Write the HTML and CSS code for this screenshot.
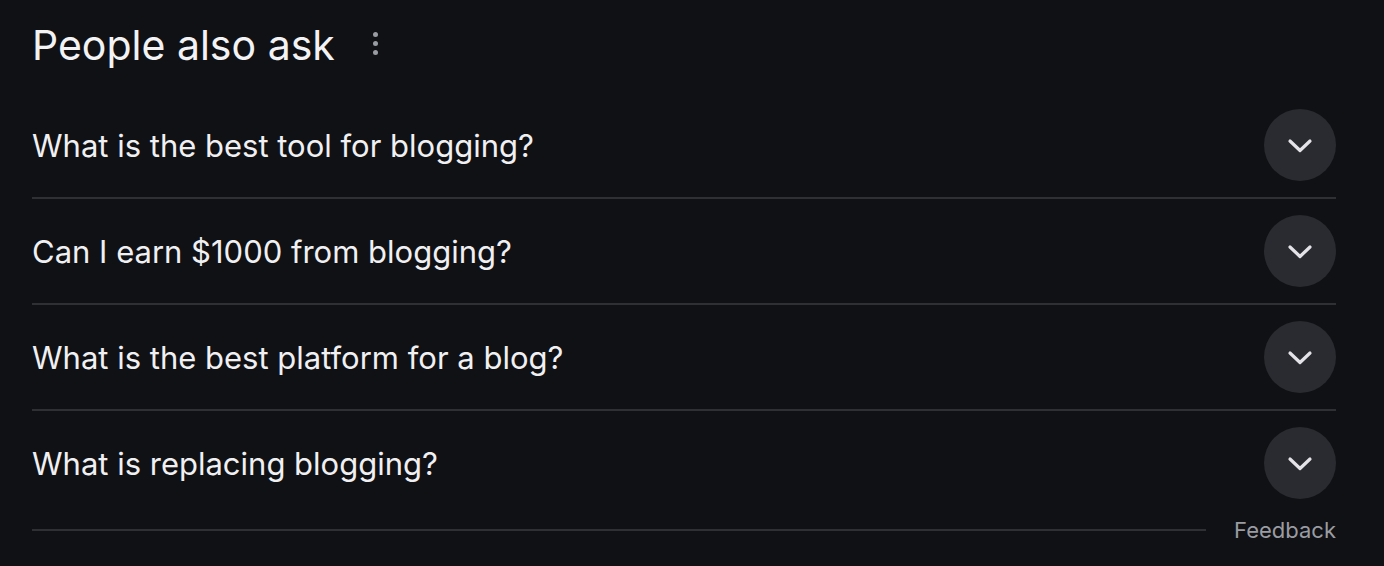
FILE: index.html
```html
<!DOCTYPE html>
<html>
<head>
<meta charset="utf-8">
<link rel="stylesheet" href="styles.css">
</head>
<body>
<div class="paa">
  <div class="head">
    <h2 class="title">People also ask</h2>
    <span class="more"><i></i><i></i><i></i></span>
  </div>
  <div class="list">
    <div class="row"><span class="q">What is the best tool for blogging?</span><span class="btn"><svg width="26" height="16" viewBox="0 0 26 16"><path d="M3 3 L13 12.5 L23 3" fill="none" stroke="#e3e3e8" stroke-width="3.2" stroke-linecap="round" stroke-linejoin="round"/></svg></span></div>
    <div class="row"><span class="q">Can I earn $1000 from blogging?</span><span class="btn"><svg width="26" height="16" viewBox="0 0 26 16"><path d="M3 3 L13 12.5 L23 3" fill="none" stroke="#e3e3e8" stroke-width="3.2" stroke-linecap="round" stroke-linejoin="round"/></svg></span></div>
    <div class="row"><span class="q">What is the best platform for a blog?</span><span class="btn"><svg width="26" height="16" viewBox="0 0 26 16"><path d="M3 3 L13 12.5 L23 3" fill="none" stroke="#e3e3e8" stroke-width="3.2" stroke-linecap="round" stroke-linejoin="round"/></svg></span></div>
    <div class="row last"><span class="q">What is replacing blogging?</span><span class="btn"><svg width="26" height="16" viewBox="0 0 26 16"><path d="M3 3 L13 12.5 L23 3" fill="none" stroke="#e3e3e8" stroke-width="3.2" stroke-linecap="round" stroke-linejoin="round"/></svg></span></div>
  </div>
  <div class="foot">
    <span class="line"></span>
    <span class="fb">Feedback</span>
  </div>
</div>
</body>
</html>
```
FILE: styles.css
```css
html, body {
  margin: 0;
  padding: 0;
  background: #101114;
}
body {
  font-family: Inter, Roboto, sans-serif;
  color: #e8e8ec;
  width: 1384px;
  height: 566px;
  overflow: hidden;
}
.paa {
  padding: 0 48px 0 32px;
}
.head {
  display: flex;
  align-items: center;
  height: 93px;
  box-sizing: border-box;
}
.title {
  margin: 0;
  font-weight: 400;
  font-size: 41px;
  letter-spacing: 0;
  color: #f3f3f5;
  line-height: 1;
  margin-top: -3px;
}
.more {
  display: flex;
  flex-direction: column;
  gap: 4px;
  margin-left: 38px;
  margin-top: -6px;
}
.more i {
  display: block;
  width: 5px;
  height: 5px;
  border-radius: 50%;
  background: #9a9ca3;
}
.row {
  display: flex;
  align-items: center;
  justify-content: space-between;
  height: 104px;
  border-bottom: 2px solid #2f3034;
}
.row.last {
  border-bottom: none;
}
.q {
  font-size: 31px;
  color: #f0f0f3;
  letter-spacing: 0;
}
.btn {
  width: 72px;
  height: 72px;
  border-radius: 50%;
  background: #2a2b31;
  display: flex;
  align-items: center;
  justify-content: center;
}
.btn svg {
  display: block;
  margin-top: 1px;
}
.foot {
  display: flex;
  align-items: center;
  margin-top: 2px;
}
.line {
  flex: 1;
  height: 2px;
  background: #2f3034;
}
.fb {
  margin-left: 28px;
  font-size: 22px;
  color: #9a9ca3;
}
```
